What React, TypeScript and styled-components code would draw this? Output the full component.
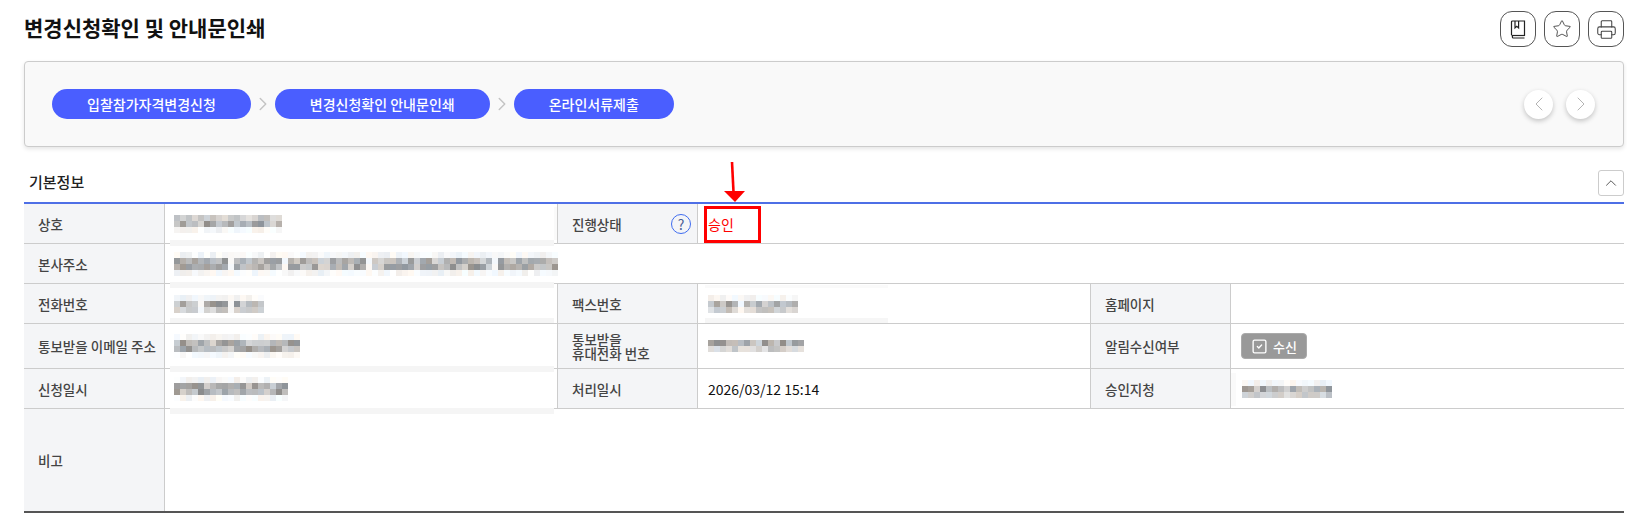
import React from "react";
import styled, { createGlobalStyle } from "styled-components";
import { ChevronLeft, ChevronRight, ChevronUp, Printer, Star, SquareCheck } from "lucide-react";

const Global = createGlobalStyle`
  html, body { margin: 0; padding: 0; background: #fff; }
  body { font-family: "Noto Sans CJK KR", "Noto Sans", sans-serif; color: #111; }
  * { box-sizing: border-box; }
`;

const Page = styled.div`
  position: relative;
  width: 1627px;
  height: 517px;
  padding: 11px 3px 0 24px;
  overflow: hidden;
`;

const Header = styled.header`
  display: flex;
  justify-content: space-between;
  align-items: flex-start;
  height: 36px;
`;

const Title = styled.h1`
  margin: 0;
  font-size: 21px;
  font-weight: 700;
  line-height: 32px;
  color: #111;
`;

const Tools = styled.div`
  display: flex;
  gap: 8px;
`;

const ToolButton = styled.button`
  width: 36px;
  height: 36px;
  padding: 0;
  display: flex;
  align-items: center;
  justify-content: center;
  background: #fff;
  border: 1px solid #555;
  border-radius: 12px;
  color: #444;
`;

const StepPanel = styled.section`
  margin-top: 14px;
  height: 86px;
  display: flex;
  align-items: center;
  justify-content: space-between;
  padding: 0 28px 0 27px;
  background: #f9f9f9;
  border: 1px solid #ccc;
  border-radius: 4px;
  box-shadow: 0 2px 4px rgba(0, 0, 0, 0.1);
`;

const Steps = styled.div`
  display: flex;
  align-items: center;
  color: #c4c4c4;
`;

const Pill = styled.div`
  height: 30px;
  padding: 0 35px;
  display: flex;
  align-items: center;
  border-radius: 15px;
  background: #4a5eff;
  color: #fff;
  font-size: 14px;
  font-weight: 500;
  white-space: nowrap;
`;

const StepGap = styled.div`
  width: 24px;
  display: flex;
  justify-content: center;
`;

const Nav = styled.div`
  display: flex;
  gap: 13px;
`;

const NavButton = styled.button`
  width: 29px;
  height: 29px;
  padding: 0;
  display: flex;
  align-items: center;
  justify-content: center;
  border: 0;
  border-radius: 50%;
  background: #fff;
  color: #b4b4b4;
  box-shadow: 0 2px 5px rgba(0, 0, 0, 0.22);
`;

const SectionHead = styled.div`
  margin-top: 23px;
  height: 26px;
  display: flex;
  align-items: center;
  justify-content: space-between;
  padding-left: 5px;
`;

const SectionTitle = styled.h2`
  margin: 0 0 4px;
  font-size: 15px;
  font-weight: 500;
  color: #222;
`;

const Collapse = styled.button`
  width: 26px;
  height: 26px;
  padding: 0;
  display: flex;
  align-items: center;
  justify-content: center;
  background: #fff;
  border: 1px solid #ccc;
  border-radius: 3px;
  color: #555;
`;

const TableWrap = styled.div`
  margin-top: 6px;
`;

const Table = styled.table`
  width: 1600px;
  table-layout: fixed;
  border-collapse: separate;
  border-spacing: 0;
  border-top: 2px solid #4e6fe6;
  border-bottom: 2px solid #555;
`;

const Row = styled.tr<{ $h: number }>`
  height: ${(p) => p.$h}px;
`;

const Th = styled.th<{ $edge?: boolean }>`
  padding: 0 0 0 14px;
  text-align: left;
  background: #f4f5f7;
  border-bottom: 1px solid #ccc;
  border-right: 1px solid #ccc;
  ${(p) => (p.$edge ? "" : "border-left: 1px solid #ccc;")}
  font-size: 13.5px;
  font-weight: 500;
  line-height: 14px;
  color: #444;
  white-space: nowrap;
`;

const LastTh = styled(Th)`
  border-bottom: 0;
`;

const ThInner = styled.div`
  display: flex;
  align-items: center;
  justify-content: space-between;
  padding-right: 6px;
`;

const Help = styled.span`
  width: 20px;
  height: 20px;
  display: flex;
  align-items: center;
  justify-content: center;
  border: 1.2px solid #3f6cf0;
  border-radius: 50%;
  font-size: 14px;
  font-weight: 400;
  color: #4a5f95;
`;

const Td = styled.td<{ $pad?: number }>`
  padding: 0 0 0 ${(p) => p.$pad ?? 10}px;
  border-bottom: 1px solid #ccc;
  font-size: 14px;
  color: #111;
  white-space: nowrap;
`;

const LastTd = styled(Td)`
  border-bottom: 0;
`;

const Status = styled.span`
  color: #f00;
  font-size: 14px;
  font-weight: 400;
`;

const DateText = styled.span`
  font-size: 14px;
`;

const Receive = styled.span`
  width: 66px;
  height: 26px;
  display: inline-flex;
  align-items: center;
  justify-content: center;
  gap: 5px;
  vertical-align: middle;
  background: #999;
  border: 1px solid #aaa;
  border-radius: 4px;
  color: #fff;
  font-size: 13px;
  font-weight: 500;
`;

const Blur = styled.svg`
  display: block;
`;

const Smudge = styled.div<{ $x: number; $y: number; $w: number; $h: number; $c: string }>`
  position: absolute;
  left: ${(p) => p.$x}px;
  top: ${(p) => p.$y}px;
  width: ${(p) => p.$w}px;
  height: ${(p) => p.$h}px;
  background: ${(p) => p.$c};
`;

const Marker = styled.div`
  position: absolute;
  left: 704px;
  top: 206px;
  width: 57px;
  height: 37px;
  border: 3px solid #f00;
`;

const Arrow = styled.svg`
  position: absolute;
  left: 720px;
  top: 158px;
`;

function Mosaic({ seed, w, rows, gaps = [] }: { seed: number; w: number; rows: string; gaps?: number[] }) {
  let s = seed * 7919 + 13;
  const rnd = () => {
    s = (s * 16807) % 2147483647;
    return (s % 1000) / 1000;
  };
  const cols = Math.round(w / 6);
  const rects: React.ReactElement[] = [];
  rows.split("").forEach((tone, r) => {
    for (let c = 0; c < cols; c++) {
      const k = rnd();
      let v = 255;
      if (tone === "d") v = 140 + k * 75;
      if (tone === "m") v = 188 + k * 42;
      if (tone === "p") v = 238 + k * 17;
      if (gaps.includes(c)) v = 248;
      const warm = rnd() * 14 - 7;
      const fill = `rgb(${Math.round(v + warm)},${Math.round(v)},${Math.round(v - warm)})`;
      rects.push(<rect key={`${r}-${c}`} x={c * 6} y={r * 6} width={6} height={6} fill={fill} />);
    }
  });
  return (
    <Blur width={cols * 6} height={rows.length * 6}>
      {rects}
    </Blur>
  );
}

function BookIcon() {
  return (
    <svg width="20" height="20" viewBox="0 0 20 20" fill="none" stroke="#222" strokeWidth="1.2">
      <path d="M3.5 16V3a1 1 0 0 1 1-1h12v14.5H5a1.5 1.5 0 0 0 0 2.5h11.5" />
      <path d="M7 2v7l1.8-1.6L10.6 9V2" />
      <path d="M3.5 16.5h13" />
    </svg>
  );
}

const smudges = [
  { x: 170, y: 240, w: 384, h: 6, c: "#f5f5f5" },
  { x: 170, y: 282, w: 384, h: 6, c: "#f5f5f5" },
  { x: 170, y: 318, w: 384, h: 5, c: "#f5f5f5" },
  { x: 170, y: 366, w: 384, h: 6, c: "#f5f5f5" },
  { x: 170, y: 408, w: 384, h: 6, c: "#f5f5f5" },
  { x: 705, y: 285, w: 183, h: 3, c: "#fafafa" },
  { x: 705, y: 318, w: 183, h: 5, c: "#f6f6f6" },
  { x: 554, y: 207, w: 3, h: 33, c: "#fafafa" },
  { x: 1231, y: 373, w: 5, h: 33, c: "#fafafa" },
];

export default function App() {
  return (
    <Page>
      <Global />
      <Header>
        <Title>변경신청확인 및 안내문인쇄</Title>
        <Tools>
          <ToolButton><BookIcon /></ToolButton>
          <ToolButton><Star size={20} strokeWidth={1.1} /></ToolButton>
          <ToolButton><Printer size={21} strokeWidth={1.2} /></ToolButton>
        </Tools>
      </Header>

      <StepPanel>
        <Steps>
          <Pill>입찰참가자격변경신청</Pill>
          <StepGap><ChevronRight size={22} strokeWidth={1.6} /></StepGap>
          <Pill>변경신청확인 안내문인쇄</Pill>
          <StepGap><ChevronRight size={22} strokeWidth={1.6} /></StepGap>
          <Pill>온라인서류제출</Pill>
        </Steps>
        <Nav>
          <NavButton><ChevronLeft size={24} strokeWidth={1} /></NavButton>
          <NavButton><ChevronRight size={24} strokeWidth={1} /></NavButton>
        </Nav>
      </StepPanel>

      <SectionHead>
        <SectionTitle>기본정보</SectionTitle>
        <Collapse><ChevronUp size={18} strokeWidth={1.3} /></Collapse>
      </SectionHead>

      <TableWrap>
        <Table>
          <colgroup>
            <col width={141} />
            <col width={392} />
            <col width={141} />
            <col width={392} />
            <col width={141} />
            <col width={393} />
          </colgroup>
          <tbody>
            <Row $h={40}>
              <Th $edge>상호</Th>
              <Td $pad={9}><Mosaic seed={1} w={108} rows="mdp" /></Td>
              <Th><ThInner>진행상태<Help>?</Help></ThInner></Th>
              <Td colSpan={3}><Status>승인</Status></Td>
            </Row>
            <Row $h={40}>
              <Th $edge>본사주소</Th>
              <Td colSpan={5} $pad={9}><Mosaic seed={2} w={384} rows="pddp" gaps={[9, 18, 32, 53]} /></Td>
            </Row>
            <Row $h={40}>
              <Th $edge>전화번호</Th>
              <Td $pad={9}><Mosaic seed={3} w={90} rows="pdm" gaps={[4, 9]} /></Td>
              <Th>팩스번호</Th>
              <Td><Mosaic seed={4} w={90} rows="pdm" gaps={[5]} /></Td>
              <Th>홈페이지</Th>
              <Td />
            </Row>
            <Row $h={45}>
              <Th $edge>통보받을 이메일 주소</Th>
              <Td $pad={9}><Mosaic seed={5} w={126} rows="pddp" /></Td>
              <Th>통보받을<br />휴대전화 번호</Th>
              <Td><Mosaic seed={6} w={96} rows="dm" /></Td>
              <Th>알림수신여부</Th>
              <Td $pad={10}>
                <Receive><SquareCheck size={17} strokeWidth={1.9} />수신</Receive>
              </Td>
            </Row>
            <Row $h={40}>
              <Th $edge>신청일시</Th>
              <Td $pad={9}><Mosaic seed={7} w={114} rows="pddp" /></Td>
              <Th>처리일시</Th>
              <Td><DateText>2026/03/12 15:14</DateText></Td>
              <Th>승인지청</Th>
              <Td $pad={11}><Mosaic seed={8} w={90} rows="pdm" /></Td>
            </Row>
            <Row $h={102}>
              <LastTh $edge>비고</LastTh>
              <LastTd colSpan={5} />
            </Row>
          </tbody>
        </Table>
      </TableWrap>

      {smudges.map((m) => (
        <Smudge key={`${m.x}-${m.y}`} $x={m.x} $y={m.y} $w={m.w} $h={m.h} $c={m.c} />
      ))}
      <Marker />
      <Arrow width="30" height="46" viewBox="0 0 30 46">
        <path d="M12 4 L13.5 34" stroke="#f00" strokeWidth="2.6" fill="none" />
        <path d="M4 33 H25 L15 44 Z" fill="#f00" />
      </Arrow>
    </Page>
  );
}
